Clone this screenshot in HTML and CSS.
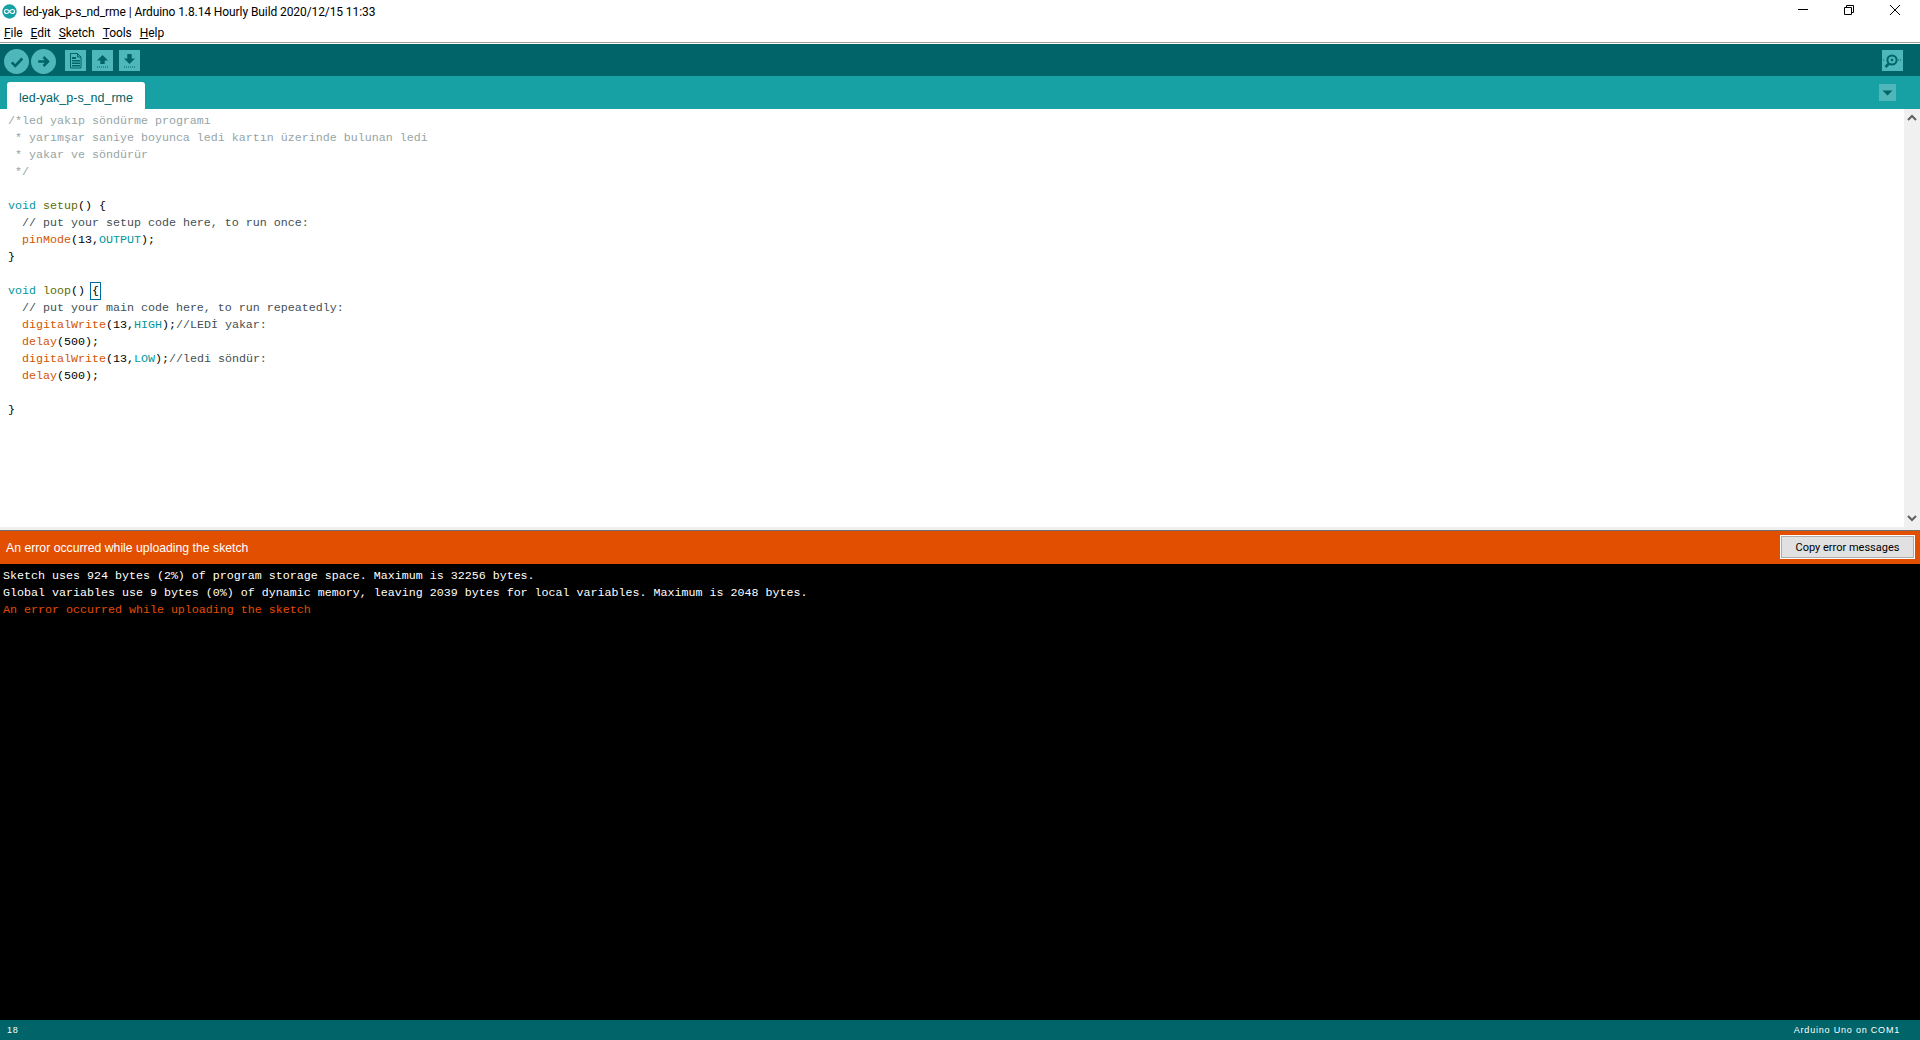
FILE: index.html
```html
<!DOCTYPE html>
<html lang="tr">
<head>
<meta charset="utf-8">
<title>led-yak_p-s_nd_rme | Arduino 1.8.14</title>
<link rel="stylesheet" href="styles.css">
</head>
<body>
<div class="app">
  <header class="titlebar">
    <svg class="appicon" width="15" height="15" viewBox="0 0 15 15"><circle cx="7.5" cy="7.5" r="7.2" fill="#17a1a5"/><path d="M7.5 7.5c-1-1.6-2-2-3-2a2 2 0 0 0 0 4c1 0 2-.4 3-2s2-2 3-2a2 2 0 0 1 0 4c-1 0-2-.4-3-2z" fill="none" stroke="#fff" stroke-width="1.1"/></svg>
    <span class="titletext">led-yak_p-s_nd_rme | Arduino 1.8.14 Hourly Build 2020/12/15 11:33</span>
    <div class="winbtns">
      <svg width="12" height="12" viewBox="0 0 12 12"><path d="M1 5.5h10" stroke="#000" fill="none"/></svg>
      <svg width="12" height="12" viewBox="0 0 12 12"><path d="M1.500 3.500h7v7h-7zM3.500 3.500v-2h7v7h-2" stroke="#000" fill="none"/></svg>
      <svg width="12" height="12" viewBox="0 0 12 12"><path d="M1 1l10 10M11 1L1 11" stroke="#000" fill="none"/></svg>
    </div>
  </header>
  <nav class="menubar">
    <span><u>F</u>ile</span><span><u>E</u>dit</span><span><u>S</u>ketch</span><span><u>T</u>ools</span><span><u>H</u>elp</span>
  </nav>
  <div class="toolbar">
    <div class="round"><svg width="14" height="14" viewBox="0 0 16 16"><path d="M2 8.500l4 4 8-8.500" fill="none" stroke="#006468" stroke-width="3"/></svg></div>
    <div class="round"><svg width="13" height="13" viewBox="0 0 16 16"><path d="M1.500 8h11M8 2.500l5.500 5.500-5.500 5.500" fill="none" stroke="#006468" stroke-width="3.200"/></svg></div>
    <div class="square first"><svg width="21" height="21" viewBox="0 0 21 21"><path d="M5.500 3.500h7l3.500 3.500v11h-10.500z" fill="none" stroke="#006468"/><path d="M12.500 3.500v3.500h3.500" fill="none" stroke="#006468"/><path d="M7 7h4v2h-4zM7 10h8v1.500h-8zM7 12.500h8v1.500h-8zM7 15h8v1.500h-8z" fill="#006468"/></svg></div>
    <div class="square"><svg width="21" height="21" viewBox="0 0 21 21"><path d="M10.500 5l5.500 5.500h-3.300v3.500h-4.400v-3.500h-3.300z" fill="#006468"/><path d="M5 17h11" stroke="#006468" stroke-dasharray="1 1" fill="none"/></svg></div>
    <div class="square"><svg width="21" height="21" viewBox="0 0 21 21"><path d="M8.300 4h4.400v4.500h3.300l-5.500 5.500-5.500-5.500h3.300z" fill="#006468"/><path d="M5 17h11" stroke="#006468" stroke-dasharray="1 1" fill="none"/></svg></div>
    <div class="square serial"><svg width="21" height="21" viewBox="0 0 21 21"><circle cx="10" cy="10" r="4.600" fill="none" stroke="#006468" stroke-width="2"/><circle cx="10" cy="10" r="1.300" fill="#006468"/><path d="M6.500 14l-3 3" stroke="#006468" stroke-width="2.600" fill="none"/><path d="M1 10h2M16 10h3.500" stroke="#006468" stroke-dasharray="1 1" fill="none"/></svg></div>
  </div>
  <div class="tabbar">
    <div class="tab">led-yak_p-s_nd_rme</div>
    <div class="tabmenu"><svg width="17" height="17" viewBox="0 0 17 17"><path d="M3.500 6.500h10l-5 5z" fill="#006468"/></svg></div>
  </div>
  <main class="editor">
    <div class="code">
      <div class="line c2">/*led yakıp söndürme programı</div>
      <div class="line c2"> * yarımşar saniye boyunca ledi kartın üzerinde bulunan ledi</div>
      <div class="line c2"> * yakar ve söndürür</div>
      <div class="line c2"> */</div>
      <div class="line"></div>
      <div class="line"><span class="kw">void</span> <span class="fn">setup</span>() {</div>
      <div class="line">  <span class="c1">// put your setup code here, to run once:</span></div>
      <div class="line">  <span class="call">pinMode</span>(13,<span class="kw">OUTPUT</span>);</div>
      <div class="line">}</div>
      <div class="line"></div>
      <div class="line"><span class="kw">void</span> <span class="fn">loop</span>() <span class="bracket">{</span></div>
      <div class="line">  <span class="c1">// put your main code here, to run repeatedly:</span></div>
      <div class="line">  <span class="call">digitalWrite</span>(13,<span class="kw">HIGH</span>);<span class="c1">//LEDİ yakar:</span></div>
      <div class="line">  <span class="call">delay</span>(500);</div>
      <div class="line">  <span class="call">digitalWrite</span>(13,<span class="kw">LOW</span>);<span class="c1">//ledi söndür:</span></div>
      <div class="line">  <span class="call">delay</span>(500);</div>
      <div class="line"></div>
      <div class="line">}</div>
    </div>
    <div class="scrollbar">
      <svg width="16" height="16" viewBox="0 0 16 16"><path d="M4 10l4-4 4 4" fill="none" stroke="#606060" stroke-width="2"/></svg>
      <svg width="16" height="16" viewBox="0 0 16 16"><path d="M4 6l4 4 4-4" fill="none" stroke="#606060" stroke-width="2"/></svg>
    </div>
  </main>
  <div class="divider"></div>
  <div class="status">
    <span class="statustext">An error occurred while uploading the sketch</span>
    <button class="copy">Copy error messages</button>
  </div>
  <section class="console">
    <div class="line">Sketch uses 924 bytes (2%) of program storage space. Maximum is 32256 bytes.</div>
    <div class="line">Global variables use 9 bytes (0%) of dynamic memory, leaving 2039 bytes for local variables. Maximum is 2048 bytes.</div>
    <div class="line err">An error occurred while uploading the sketch</div>
  </section>
  <footer class="footer">
    <span>18</span>
    <span class="board">Arduino Uno on COM1</span>
  </footer>
</div>
</body>
</html>
```
FILE: styles.css
```css
* { box-sizing: border-box; }
html, body { margin: 0; padding: 0; height: 100%; overflow: hidden; }
body { background: #fff; font-family: Roboto, "Open Sans", sans-serif; }
.app { display: flex; flex-direction: column; height: 1040px; width: 1920px; }

.titlebar { height: 22px; flex: none; display: flex; align-items: center; padding-left: 2px; font-size: 12px; color: #000; }
.appicon { flex: none; }
.titletext { margin-left: 6px; margin-top: 1px; letter-spacing: -.09px; }
.winbtns { margin-left: auto; display: flex; gap: 34px; padding-right: 19px; align-self: flex-start; padding-top: 4px; }

.menubar { height: 20px; flex: none; display: flex; align-items: center; gap: 8px; padding: 2px 0 0 4px; font-size: 12px; letter-spacing: -.06px; color: #000; }
.toolbar { height: 34px; flex: none; display: flex; align-items: flex-start; background: #006468; border-top: 1px solid #a0a0a0; box-shadow: inset 0 1px 0 #fff; padding: 7px 17px 0 4px; gap: 6px; }
.round { width: 25px; height: 25px; margin-top: -1px; border-radius: 50%; background: #4db7bb; display: flex; align-items: center; justify-content: center; }
.round + .round { margin-left: -4px; }
.square { width: 21px; height: 21px; background: #4db7bb; display: flex; }
.first { margin-left: 3px; }
.serial { margin-left: auto; }

.tabbar { height: 33px; flex: none; background: #17a1a5; display: flex; align-items: flex-end; padding-left: 7px; }
.tab { width: 138px; height: 27px; background: #fff; border-radius: 3px 3px 0 0; color: #006468; font-family: "Liberation Sans", sans-serif; font-size: 12.5px; display: flex; align-items: center; justify-content: center; padding-top: 4px; }
.tabmenu { width: 17px; height: 17px; background: #4fb6b9; margin-left: auto; margin-right: 24px; align-self: flex-start; margin-top: 8px; display: flex; }

.editor { height: 418px; flex: none; display: flex; background: #fff; }
.code { flex: 1; padding: 4px 0 0 8px; font-family: "Liberation Mono", monospace; font-size: 11.67px; color: #000; }
.line { height: 17px; line-height: 17px; white-space: pre; }
.c1 { color: #434f54; }
.c2 { color: #95a5a6; }
.kw { color: #00979c; }
.fn { color: #5e6d03; }
.call { color: #d35400; }
.bracket { outline: 1px solid #006c9e; outline-offset: 1px; }
.scrollbar { width: 16px; flex: none; background: #f0f0f0; display: flex; flex-direction: column; justify-content: space-between; padding: 1px 0; }

.divider { height: 4px; flex: none; background: #efefef; border-bottom: 1px solid #6f6f6f; }
.status { height: 33px; flex: none; background: #e34f00; color: #fff; font-family: "Liberation Sans", sans-serif; font-size: 12.25px; display: flex; align-items: center; justify-content: space-between; padding: 0 6px 1px 6px; }
.statustext { margin-top: 2px; }
.copy { width: 133px; height: 22px; margin: 0; background: #e1e1e1; border: 1px solid #adadad; outline: 1px solid #fff; font-family: Roboto, sans-serif; font-size: 11px; color: #000; padding: 0; }

.console { flex: 1; background: #000; padding: 4px 0 0 3px; font-family: "Liberation Mono", monospace; font-size: 11.67px; color: #fff; }
.err { color: #e34c00; }

.footer { height: 20px; flex: none; background: #006468; color: #fff; font-family: "Liberation Sans", sans-serif; font-size: 9px; letter-spacing: .8px; display: flex; align-items: center; justify-content: space-between; padding: 0 20px 0 7px; }
```
